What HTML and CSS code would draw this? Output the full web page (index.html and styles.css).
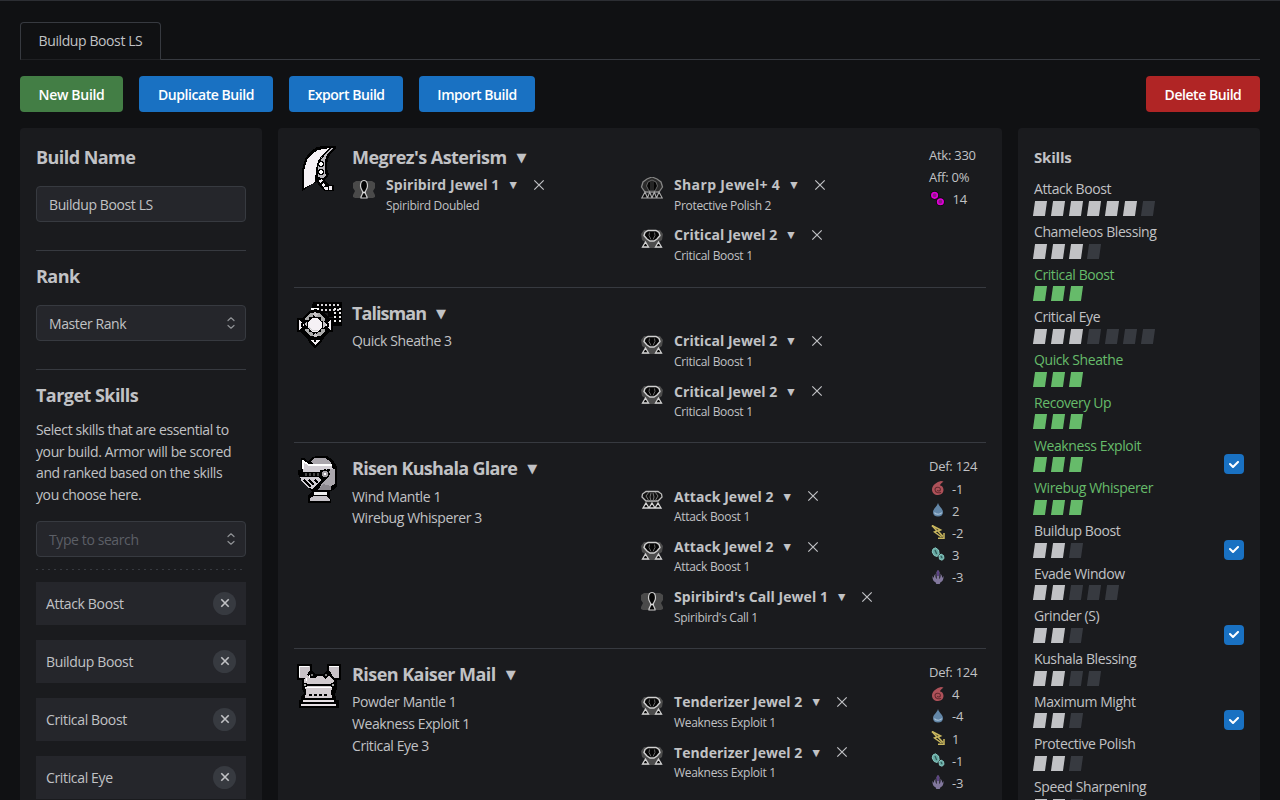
FILE: index.html
```html
<!DOCTYPE html>
<html lang="en">
<head>
<meta charset="utf-8">
<title>Build Planner</title>
<link rel="stylesheet" href="styles.css">
</head>
<body>
<svg class="defs" width="0" height="0" aria-hidden="true">
  <symbol id="x" viewBox="0 0 12 12"><path d="M1.3 1.3 10.7 10.7M10.7 1.3 1.3 10.7" fill="none" stroke="currentColor" stroke-width="1.2"/></symbol>
  <symbol id="xb" viewBox="0 0 10 10"><path d="M1.3 1.3 8.7 8.7M8.7 1.3 1.3 8.7" fill="none" stroke="currentColor" stroke-width="1.6"/></symbol>
  <symbol id="updown" viewBox="0 0 10 14"><path d="M2 4.5 5 1.8 8 4.5M2 9.5 5 12.2 8 9.5" fill="none" stroke="currentColor" stroke-width="1.2" stroke-linecap="round" stroke-linejoin="round"/></symbol>
  <symbol id="check" viewBox="0 0 10 7"><path d="M4 4.586 1.707 2.293A1 1 0 1 0 .293 3.707l3 3a.997.997 0 0 0 1.414 0l5-5A1 1 0 1 0 8.293.293L4 4.586Z" fill="#fff"/></symbol>
  <symbol id="jewel1" viewBox="0 0 24 24">
    <path d="M1 5 4 3h5l3-1 3 1h5l3 2v5l-2 3 2 4v2l-2 1H3l-2-1v-2l2-4-2-3Z" fill="#4a4a4a"/>
    <path d="M12 2.500c2.600 0 3.500 3 3.500 5.500 0 3-2 4.500-2.500 6.500l2 4.500v1H9v-1l2-4.500c-.5-2-2.500-3.500-2.500-6.500 0-2.500.9-5.500 3.500-5.500Z" fill="#050505" stroke="#d0d0d0" stroke-width="1.200"/>
    <path d="M10.500 14.500h3" stroke="#ddd" stroke-width="1.500"/>
  </symbol>
  <symbol id="jewel2" viewBox="0 0 24 24">
    <path d="M4 2h16l3 4-1 6-3 2 3 6H2l3-6-3-2-1-6Z" fill="#4c4c4c"/>
    <path d="M8 2.500h8l3 2 1 3-3 3.500-3 2h-4l-3-2-3-3.500 1-3Z" fill="#060606" stroke="#d0d0d0" stroke-width="1.400"/>
    <path d="M9.500 4.500 9 7.500l2 4M14.500 4.500l.5 3-2 4" fill="none" stroke="#666"/>
    <path d="m5.500 14 3 5h-6ZM18.500 14l3 5h-6Z" fill="#050505" stroke="#d0d0d0" stroke-width="1.300"/>
  </symbol>
  <symbol id="jewel3" viewBox="0 0 24 24">
    <path d="M6 2h12l4 3 1 3-4 4 2.500 7h-19L5 12 1 8l1-3Z" fill="#222"/>
    <path d="M6 2.500h12l3.500 2.500.5 3-4 4H6L2 8l.5-3Z" fill="#111" stroke="#bbb" stroke-width="1.300"/>
    <path d="M9 3 6 7l3 5M15 3l3 4-3 5M11 4l-1 4 1 4M13 4l1 4-1 4" fill="none" stroke="#777"/>
    <path d="m6 14 3 5H3Zm6 0 3 5H9Zm6 0 3 5h-6Z" fill="#050505" stroke="#d8d8d8" stroke-width="1.300"/>
  </symbol>
  <symbol id="jewel4" viewBox="0 0 24 24">
    <path d="m12 0 5 2 4 3 1.500 5-3.500 5H5l-3.500-5L3 5l4-3Z" fill="#2a2a2a" stroke="#858585" stroke-width="1.300"/>
    <path d="M12 3 8 5l-1.500 4L9 14h6l2.500-5L16 5Z" fill="#060606" stroke="#666"/>
    <path d="M11 4v10m2-10v10" stroke="#444" fill="none"/>
    <path d="m5 15 2.500 6H1.800Zm4.700 0 2.300 6H7.500Zm4.600 0 2.200 6H12Zm4.700 0 3.200 6h-5.700Z" fill="#080808" stroke="#aaa" stroke-width="1.100"/>
  </symbol>
  <symbol id="fire" viewBox="0 0 14 14"><path d="M10 0C6 1 1 4 1 8.500 1 12 3.500 14 7 14s5.500-2.300 5.500-5.200C12.500 6 10.500 4.500 9 4.500 9 3 11 2 12.500.500Z" fill="#ae5159"/><path d="M10 11.200c-2.500 1.300-6 .3-6-2.700 0-2.500 4.500-3.200 5.400-.6.600 1.900-2.400 3-3 1.100" fill="none" stroke="#642b30" stroke-width="1.100"/></symbol>
  <symbol id="water" viewBox="0 0 14 14"><path d="M7 0c1 4 5 5.500 5 9.200C12 12 10 13.500 7 13.500S2 12 2 9.200C2 5.500 6 4 7 0Z" fill="#6387a8"/><path d="M3.500 9.500c.5 2 5.500 2.500 7.300.2" fill="none" stroke="#a9c2d8" stroke-width="1.200"/></symbol>
  <symbol id="thunder" viewBox="0 0 14 14"><path d="M1 .500 9.500 5 7 6l5 5.500" fill="none" stroke="#c9b75e" stroke-width="1.600"/><path d="m1 .500 5 5.500-2.500 1 7 5" fill="none" stroke="#c9b75e" stroke-width="1.500"/><path d="M7 13.200h6V8" fill="none" stroke="#c9b75e" stroke-width="1.500"/></symbol>
  <symbol id="ice" viewBox="0 0 14 14"><path d="m4.500.8 3 2.200.7 4-2 2.500-3-1-2-3.500L2 2Z" fill="#68aaa4" stroke="#87c8c0"/><path d="m10 7 2.500 1.500.5 3-2 1.700-2.500-1L8 9Z" fill="#68aaa4" stroke="#87c8c0"/><path d="m4 3 1.700 4M10 9l1 2" stroke="#315e5b" stroke-width="1.300"/></symbol>
  <symbol id="dragon" viewBox="0 0 14 14"><path d="m7 0 1.500 2-.3 7c1.200-.7 1.600-3 1.300-5.500L11 6v2l1.500-2c.3 3.500-1 5.500-3 6.300L8.700 14H5.300l-.8-1.700c-2-.8-3.300-2.800-3-6.300L3 8V6l1.500-2.500C4.200 6 4.600 8.300 5.800 9l-.3-7Z" fill="#81779c"/><path d="m7 0 1.200 2L8 6H6l-.2-4Z" fill="#5c4384"/></symbol>
  <symbol id="blast" viewBox="0 0 14 14"><circle cx="4.300" cy="4" r="4" fill="#050505"/><circle cx="9.700" cy="10" r="4" fill="#050505"/><circle cx="4.300" cy="4" r="2.600" fill="#8d1789" stroke="#e000d8" stroke-width="1.500"/><circle cx="9.700" cy="10" r="2.600" fill="#8d1789" stroke="#e000d8" stroke-width="1.500"/></symbol>
</svg>

<nav class="tabs"><button class="tab">Buildup Boost LS</button><span class="tabs-line"></span></nav>

<div class="actions">
  <button class="btn green">New Build</button>
  <button class="btn duplicate">Duplicate Build</button>
  <button class="btn export">Export Build</button>
  <button class="btn import">Import Build</button>
  <button class="btn red">Delete Build</button>
</div>

<main class="columns">
  <aside class="panel settings">
    <h2>Build Name</h2>
    <div class="field">Buildup Boost LS</div>
    <hr>
    <h2>Rank</h2>
    <div class="field">Master Rank<svg class="updown"><use href="#updown"/></svg></div>
    <hr>
    <h2>Target Skills</h2>
    <p class="hint">Select skills that are essential to<br>your build. Armor will be scored<br>and ranked based on the skills<br>you choose here.</p>
    <div class="field placeholder">Type to search<svg class="updown"><use href="#updown"/></svg></div>
    <div class="dashed"></div>
    <div class="targets">
      <div class="target"><span>Attack Boost</span><button class="remove"><svg><use href="#xb"/></svg></button></div>
      <div class="target"><span>Buildup Boost</span><button class="remove"><svg><use href="#xb"/></svg></button></div>
      <div class="target"><span>Critical Boost</span><button class="remove"><svg><use href="#xb"/></svg></button></div>
      <div class="target"><span>Critical Eye</span><button class="remove"><svg><use href="#xb"/></svg></button></div>
    </div>
  </aside>

  <section class="panel gear">
    <article class="slot weapon">
      <svg class="piece" viewBox="4 4 48 48" shape-rendering="crispEdges">
        <path d="M12 51V30l3-11 5-7 7-5 6-1h13v2l-5 5-3 6-1 6v4l2 5-2 4-3 2 5 5h5v6h-9l-5-4-3-5-5 2-8 6Z" fill="#000"/>
        <path d="M14 48V31l3-11 5-6 6-4 12-2-7 6-5 7-2 8-1 12-3 3Z" fill="#f6f2f6"/>
        <path d="M42 8h1l-6 7-2 6v11l1 3-3 3-6-1v-7l2-9 5-7Z" fill="#bbb8bd"/>
        <path d="m41 8-7 7-5 7-2 8v12" fill="none" stroke="#000" stroke-width="1"/>
        <circle cx="31" cy="24" r="2.500" fill="#fff" stroke="#000" stroke-width="1.500"/><circle cx="31" cy="32" r="2.500" fill="#fff" stroke="#000" stroke-width="1.500"/>
        <path d="m28 41 4-2 1 2-3 2ZM31 45l3-2 1 2-2 2ZM34 47h4v3h-3ZM39 46h3v4h-3Z" fill="#f2edf2"/>
      </svg>
      <div class="body">
        <h3>Megrez's Asterism<span class="caret">▼</span></h3>
        <div class="detail">
          <div>
            <div class="jewel"><svg class="gem"><use href="#jewel1"/></svg><div><h4>Spiribird Jewel 1<span class="caret">▼</span><svg class="close"><use href="#x"/></svg></h4><p>Spiribird Doubled</p></div></div>
          </div>
          <div>
            <div class="jewel"><svg class="gem big"><use href="#jewel4"/></svg><div><h4 class="wide">Sharp Jewel+ 4<span class="caret">▼</span><svg class="close"><use href="#x"/></svg></h4><p>Protective Polish 2</p></div></div>
            <div class="jewel"><svg class="gem"><use href="#jewel2"/></svg><div><h4>Critical Jewel 2<span class="caret">▼</span><svg class="close"><use href="#x"/></svg></h4><p>Critical Boost 1</p></div></div>
          </div>
        </div>
      </div>
      <ul class="stats"><li>Atk: 330</li><li>Aff: 0%</li><li class="blast"><svg><use href="#blast"/></svg>14</li></ul>
    </article>

    <article class="slot">
      <svg class="piece" viewBox="4 10 48 48" shape-rendering="crispEdges">
        <path d="M23 12h29v24h-9v-9h-5v-4H22v-9h1Z" fill="#000"/>
        <path d="M27 14.500h23M27 19.500h23" stroke="#d7d4d7" stroke-width="2" stroke-dasharray="2 2"/>
        <path d="M44.500 18v16M49.500 18v16" stroke="#eee" stroke-width="2" stroke-dasharray="2 2"/>
        <path d="M21 19h8" stroke="#fff" stroke-width="2"/>
        <path d="m25 19 7 2 7 7h4v14h-4l-5 6-4 6-5 4-5-4-3-6-7-6H7V28h5l6-6Z" fill="#000"/>
        <path d="M20 23h3v4h-4v3h-4v-2ZM26 23h3l6 5v3h-4v-4h-5ZM15 39h4v3h4v4h-3l-5-5ZM35 39v2l-5 5h-3v-4h4v-3Z" fill="#aaa"/>
        <path d="m22 24 3-2 3 2-3 3Zm-8 10 3-3v6Zm19-3 4 4-4 3ZM22 46l3-3 3 3-3 1Z" fill="#c7c4c7"/>
        <circle cx="25" cy="35" r="7.500" fill="#f5f1f5" stroke="#000" stroke-width="1"/><path d="M19 37q3 5 9 3" fill="none" stroke="#ccc" stroke-width="1"/>
        <path d="m9 30 6 5-6 5ZM41 30l-6 5 6 5ZM20 50h10l-5 5Z" fill="#f2eef2"/>
        <path d="M11 33h2v4h-2Zm26 0h2v4h-2ZM24 50h2v2h-2Z" fill="#000"/>
      </svg>
      <div class="body">
        <h3 class="tight">Talisman<span class="caret">▼</span></h3>
        <div class="detail">
          <ul class="perks"><li>Quick Sheathe 3</li></ul>
          <div>
            <div class="jewel"><svg class="gem"><use href="#jewel2"/></svg><div><h4>Critical Jewel 2<span class="caret">▼</span><svg class="close"><use href="#x"/></svg></h4><p>Critical Boost 1</p></div></div>
            <div class="jewel"><svg class="gem"><use href="#jewel2"/></svg><div><h4>Critical Jewel 2<span class="caret">▼</span><svg class="close"><use href="#x"/></svg></h4><p>Critical Boost 1</p></div></div>
          </div>
        </div>
      </div>
      <ul class="stats"></ul>
    </article>

    <article class="slot">
      <svg class="piece" viewBox="4 5 48 48" shape-rendering="crispEdges">
        <path d="M11 8h3l4 3 4-4 5-1h10l6 4 4 7v19l-4 4-3 1v3l1 9H18v-8l4-4-9-8-5-9v-4h3Z" fill="#000"/>
        <path d="m21 11 4-3h10l6 4 1 3H24ZM40 19h5v15l-5 3-10 2 1-5 7-7Z" fill="#aaa6ac"/>
        <path d="M13 12l6 4h23l1 3-13 1v2H13ZM10 27h18l3 3-9 9-5-2-5-5Z" fill="#d2ced4"/>
        <path d="M13 19v-8l6 4h23" fill="none" stroke="#fff" stroke-width="1.500"/>
        <path d="m14 30 7 7m-2-7 5 5m1-5 3 3" stroke="#000" stroke-width="2"/>
        <path d="M12 22h17v4H12Z" fill="#000"/><path d="M15 24h14" stroke="#444" stroke-width="3" stroke-dasharray="2 2"/>
        <path d="m27 40 6-6 8 2v4Z" fill="#8c888e"/>
        <path d="M24 42h13v3H24Z" fill="#eee"/><path d="m20 48 4-2h12l4 3v2H20Z" fill="#c5c1c6"/>
        <circle cx="35" cy="24" r="4" fill="#a5a1a6" stroke="#000" stroke-width="1.500"/><circle cx="35" cy="24" r="1.500" fill="#fff"/>
      </svg>
      <div class="body">
        <h3 class="snug">Risen Kushala Glare<span class="caret">▼</span></h3>
        <div class="detail">
          <ul class="perks"><li>Wind Mantle 1</li><li>Wirebug Whisperer 3</li></ul>
          <div>
            <div class="jewel"><svg class="gem"><use href="#jewel3"/></svg><div><h4>Attack Jewel 2<span class="caret">▼</span><svg class="close"><use href="#x"/></svg></h4><p>Attack Boost 1</p></div></div>
            <div class="jewel"><svg class="gem"><use href="#jewel2"/></svg><div><h4>Attack Jewel 2<span class="caret">▼</span><svg class="close"><use href="#x"/></svg></h4><p>Attack Boost 1</p></div></div>
            <div class="jewel"><svg class="gem"><use href="#jewel1"/></svg><div><h4>Spiribird's Call Jewel 1<span class="caret">▼</span><svg class="close"><use href="#x"/></svg></h4><p>Spiribird's Call 1</p></div></div>
          </div>
        </div>
      </div>
      <ul class="stats"><li>Def: 124</li><li><svg><use href="#fire"/></svg>-1</li><li><svg><use href="#water"/></svg>2</li><li><svg><use href="#thunder"/></svg>-2</li><li><svg><use href="#ice"/></svg>3</li><li><svg><use href="#dragon"/></svg>-3</li></ul>
    </article>

    <article class="slot">
      <svg class="piece" viewBox="4 6 48 48" shape-rendering="crispEdges">
        <path d="M7 9h15v6l3 4h8l4-4V9h14v16h-4v9l-2 5 1 4v2h3v8H9v-8h2v-3l3-4-2-4v-9H7Z" fill="#000"/>
        <path d="M9 11h11v4l-5 8H9ZM39 11h10v12h-5l-5-8Z" fill="#c8c2c7"/>
        <path d="M9 11h10M39 11h10M9 11v11" stroke="#fff" stroke-width="1"/>
        <path d="m17 20 3 3h5l2-2h5l3 3 4-4 5 6-1 3H14v-4Z" fill="#d1cace"/>
        <path d="M15 31h28l-2 6 1 6H15l1-6Z" fill="#d3ccd0"/>
        <path d="M16 23v3M19 20v3M15 32h27" stroke="#fff" stroke-width="1"/>
        <path d="M19 40h3m2 0h3m2 0h3m2 0h3" stroke="#000" stroke-width="2"/>
        <path d="M13 45h31v2H13ZM11 49h35v2H11Z" fill="#e5dfe3"/>
        <circle cx="22" cy="20" r="2" stroke="#000" fill="#777"/><circle cx="36" cy="20" r="2" stroke="#000" fill="#777"/>
        <circle cx="15" cy="30" r="2" stroke="#000" fill="#aaa"/><circle cx="43" cy="30" r="2" stroke="#000" fill="#aaa"/>
      </svg>
      <div class="body">
        <h3>Risen Kaiser Mail<span class="caret">▼</span></h3>
        <div class="detail">
          <ul class="perks"><li>Powder Mantle 1</li><li>Weakness Exploit 1</li><li>Critical Eye 3</li></ul>
          <div>
            <div class="jewel"><svg class="gem"><use href="#jewel2"/></svg><div><h4>Tenderizer Jewel 2<span class="caret">▼</span><svg class="close"><use href="#x"/></svg></h4><p>Weakness Exploit 1</p></div></div>
            <div class="jewel"><svg class="gem"><use href="#jewel2"/></svg><div><h4>Tenderizer Jewel 2<span class="caret">▼</span><svg class="close"><use href="#x"/></svg></h4><p>Weakness Exploit 1</p></div></div>
          </div>
        </div>
      </div>
      <ul class="stats"><li>Def: 124</li><li><svg><use href="#fire"/></svg>4</li><li><svg><use href="#water"/></svg>-4</li><li><svg><use href="#thunder"/></svg>1</li><li><svg><use href="#ice"/></svg>-1</li><li><svg><use href="#dragon"/></svg>-3</li></ul>
    </article>
  </section>

  <aside class="panel skills">
    <h2>Skills</h2>
    <div class="skill"><span>Attack Boost</span><div class="pips"><i></i><i></i><i></i><i></i><i></i><i></i><i class="off"></i></div></div>
    <div class="skill"><span>Chameleos Blessing</span><div class="pips"><i></i><i></i><i></i><i class="off"></i></div></div>
    <div class="skill max"><span>Critical Boost</span><div class="pips"><i></i><i></i><i></i></div></div>
    <div class="skill"><span>Critical Eye</span><div class="pips"><i></i><i></i><i></i><i class="off"></i><i class="off"></i><i class="off"></i><i class="off"></i></div></div>
    <div class="skill max"><span>Quick Sheathe</span><div class="pips"><i></i><i></i><i></i></div></div>
    <div class="skill max"><span>Recovery Up</span><div class="pips"><i></i><i></i><i></i></div></div>
    <div class="skill max"><span>Weakness Exploit</span><div class="pips"><i></i><i></i><i></i><b class="box"><svg><use href="#check"/></svg></b></div></div>
    <div class="skill max"><span>Wirebug Whisperer</span><div class="pips"><i></i><i></i><i></i></div></div>
    <div class="skill"><span>Buildup Boost</span><div class="pips"><i></i><i></i><i class="off"></i><b class="box"><svg><use href="#check"/></svg></b></div></div>
    <div class="skill"><span>Evade Window</span><div class="pips"><i></i><i></i><i class="off"></i><i class="off"></i><i class="off"></i></div></div>
    <div class="skill"><span>Grinder (S)</span><div class="pips"><i></i><i></i><i class="off"></i><b class="box"><svg><use href="#check"/></svg></b></div></div>
    <div class="skill"><span>Kushala Blessing</span><div class="pips"><i></i><i></i><i class="off"></i><i class="off"></i></div></div>
    <div class="skill"><span>Maximum Might</span><div class="pips"><i></i><i></i><i class="off"></i><b class="box"><svg><use href="#check"/></svg></b></div></div>
    <div class="skill"><span>Protective Polish</span><div class="pips"><i></i><i></i><i class="off"></i></div></div>
    <div class="skill"><span>Speed Sharpening</span><div class="pips"><i></i><i></i><i class="off"></i></div></div>
  </aside>
</main>
</body>
</html>
```
FILE: styles.css
```css
* { box-sizing: border-box; }
html { height: 100%; overflow: hidden; }
body {
  display: flex;
  flex-direction: column;
  margin: 0;
  height: 800px;
  overflow: hidden;
  padding: 21px 20px 0;
  border-top: 1px solid #2c2e33;
  background: #101113;
  color: #c1c2c5;
  font: 14px/21.7px "Open Sans", "Noto Sans", sans-serif;
  letter-spacing: -0.4px;
}
h2, h3, h4, p, ul { margin: 0; padding: 0; list-style: none; }
button { font: inherit; letter-spacing: inherit; color: inherit; padding: 0; border: 0; }
svg { display: block; flex: none; }
.defs { position: absolute; }

.tabs { display: flex; flex: none; height: 38px; }
.tab {
  width: 141px;
  border: 1px solid #373a40;
  border-bottom-color: #1f2023;
  border-radius: 4px 4px 0 0;
  background: #101113;
}
.tabs-line { flex: 1; border-bottom: 1px solid #373a40; }

.actions { display: flex; flex: none; gap: 16px; margin: 16px 0; }
.btn {
  height: 36px;
  padding-top: 2px;
  border-radius: 4px;
  background: #1971c2;
  color: #fff;
  font-weight: 600;
  letter-spacing: -0.45px;
  white-space: nowrap;
}
.btn.green { width: 103px; background: #437e45; letter-spacing: -0.3px; }
.btn.duplicate { width: 134px; }
.btn.export { width: 114px; }
.btn.import { width: 116px; }
.btn.red { width: 114px; background: #b02525; margin-left: auto; }

.columns { display: grid; flex: 1; min-height: 0; overflow: hidden; grid-template-columns: 242px 724px 242px; gap: 16px; }
.panel { height: 900px; padding: 16px; border-radius: 4px; background: #1a1b1e; }

h2, h3 { font-size: 18px; line-height: 26px; height: 28px; font-weight: 700; letter-spacing: -0.55px; }
h3.tight { letter-spacing: -0.95px; }
h3.snug { letter-spacing: -0.68px; }
.settings h2 { margin-bottom: 14px; }
.field {
  display: flex;
  align-items: center;
  justify-content: space-between;
  height: 36px;
  padding: 1px 9px 0 12px;
  border: 1px solid #373a40;
  border-radius: 4px;
  background: #25262b;
}
.placeholder { padding-top: 2px; color: #5c5f66; }
.updown { width: 10px; height: 14px; margin-top: -2px; color: #909296; }
hr { height: 1px; border: 0; margin: 28px 0 12px; background: #373a40; }
.settings .hint { margin: -5px 0 15px; }
.dashed { height: 1px; margin: 12px 0; background: repeating-linear-gradient(90deg, #373a40 0 2px, transparent 2px 6px); }
.targets { display: grid; gap: 15px; }
.target { display: flex; align-items: center; justify-content: space-between; height: 43px; padding: 0 10px; background: #25262b; letter-spacing: -0.35px; }
.target span { padding-top: 2px; }
.remove { display: grid; place-items: center; width: 23px; height: 23px; border-radius: 50%; background: #373a40; }
.remove svg { width: 10px; height: 10px; }

.slot {
  display: grid;
  grid-template-columns: 48px 587px 1fr;
  height: 155.3px;
  padding-top: 12px;
  border-top: 1px solid #373a40;
}
.slot:nth-child(3) { height: 205.8px; }
.slot.weapon { height: 143.2px; padding-top: 0; border-top: 0; }
.piece { width: 48px; height: 48px; }
.body { padding-left: 10px; }
.caret { font-family: "DejaVu Sans", sans-serif; font-size: 13px; line-height: 1; font-weight: 400; letter-spacing: 0; margin-left: 10px; vertical-align: 2px; }
.detail { display: grid; grid-template-columns: 288px 1fr; padding-top: 2.2px; }
.jewel { display: flex; gap: 10px; height: 50.3px; }
.gem { width: 24px; height: 24px; margin-top: 3.6px; }
.gem.big { margin-top: 2.4px; }
h4 { display: flex; align-items: center; height: 22.5px; padding-bottom: 1.2px; font-size: 14px; font-weight: 700; line-height: 21.3px; letter-spacing: 0.05px; }
h4.wide { letter-spacing: 0.35px; }
h4 .caret { font-size: 9.5px; }
.close { width: 12px; height: 12px; margin-left: 16px; }
.jewel p { font-size: 12px; line-height: 18.6px; letter-spacing: -0.3px; }
.stats { font-size: 13px; line-height: 22.1px; letter-spacing: -0.25px; }
.stats li { display: flex; align-items: center; gap: 7.5px; height: 22.1px; }
.stats svg { width: 14px; height: 14px; margin: -1px 0 0 1.5px; }
.stats .blast svg { width: 15px; height: 15px; margin-left: 1px; }

.skills h2 { font-size: 15px; margin-bottom: 6px; letter-spacing: -0.2px; }
.skill { height: 42.7px; }
.skill span { display: block; height: 23px; padding-top: 0.4px; }
.pips { display: flex; gap: 6px; height: 15px; align-items: center; }
.pips i { width: 12px; height: 15px; background: #c1c2c5; transform: skewX(-8deg); }
.max { color: #66bb6a; }
.max i { background: #66bb6a; }
.pips .off { background: #373a40; }
.box { display: grid; place-items: center; flex: none; width: 20px; height: 20px; margin: -1px 0 0 auto; border-radius: 4px; background: #1971c2; }
.box svg { width: 10px; height: 7px; }
```
